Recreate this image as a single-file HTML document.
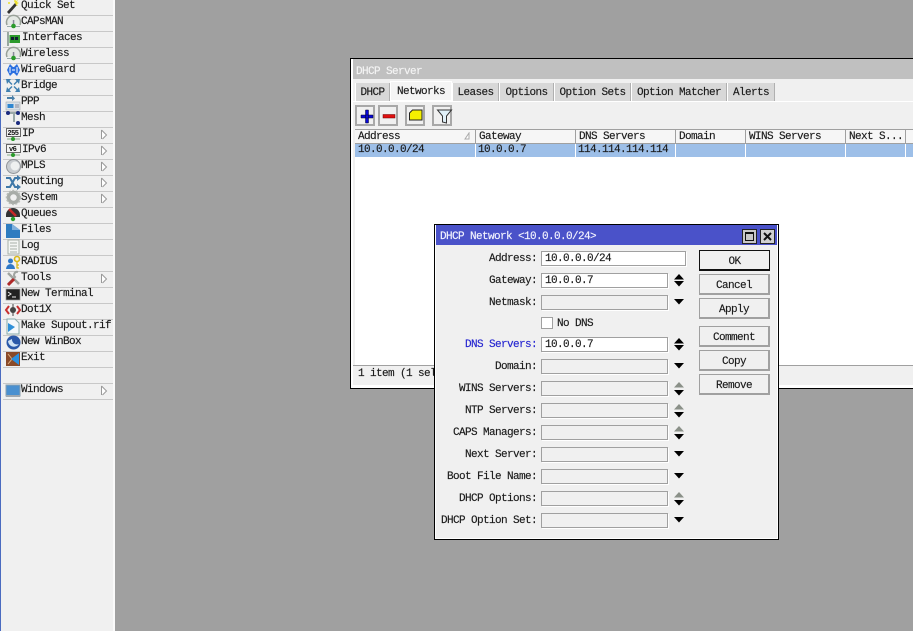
<!DOCTYPE html>
<html><head><meta charset="utf-8"><style>
html,body{margin:0;padding:0;width:913px;height:631px;overflow:hidden;background:#a0a0a0}
body{position:relative;font:11px/12px "Liberation Mono",monospace;letter-spacing:-.6px;color:#1a1a1a;-webkit-text-stroke:.15px}
div{position:absolute;box-sizing:border-box;white-space:pre}
.t{height:12px;margin-top:1px}
.ln{left:3px;width:110px;height:1px;background:#c8c8c8;border-bottom:0}
.tab{top:83px;height:18px;background:#d8d8d8;border-right:1px solid #b0b0b0;border-left:1px solid #fff;text-align:center;line-height:20px}
.tb{top:105px;width:20px;height:21px;background:#f0f0f0;border:2px solid #a8a8a8}
.h{top:130px;height:13px;background:#f6f6f6;border-right:1px solid #a0a0a0;padding-left:3px;line-height:15px}
.l{left:436px;width:101px;text-align:right}
.f{left:541px;width:127px;height:15px;background:#f0f0f0;border:1px solid #a0a0a0;box-shadow:1px 1px 0 #fff;padding-left:3px;line-height:15px;font-size:11px}
.w{background:#fff}
.b{left:699px;width:71px;height:21px;background:#f0f0f0;border:1px solid #a0a0a0;border-width:1px 2px 2px 1px;border-color:#a0a0a0;text-align:center;line-height:22px}
</style></head><body>
<div style="left:0;top:0;width:115px;height:631px;background:#f0f0f0;border-right:2px solid #fafafa;border-left:1px solid #4a6bc0"></div>
<div class="ln" style="top:15px"></div><div class="ln" style="top:31px"></div><div class="ln" style="top:47px"></div><div class="ln" style="top:63px"></div><div class="ln" style="top:79px"></div><div class="ln" style="top:95px"></div><div class="ln" style="top:111px"></div><div class="ln" style="top:127px"></div><div class="ln" style="top:143px"></div><div class="ln" style="top:159px"></div><div class="ln" style="top:175px"></div><div class="ln" style="top:191px"></div><div class="ln" style="top:207px"></div><div class="ln" style="top:223px"></div><div class="ln" style="top:239px"></div><div class="ln" style="top:255px"></div><div class="ln" style="top:271px"></div><div class="ln" style="top:287px"></div><div class="ln" style="top:303px"></div><div class="ln" style="top:319px"></div><div class="ln" style="top:335px"></div><div class="ln" style="top:351px"></div><div class="ln" style="top:367px"></div><div class="ln" style="top:383px"></div><div class="ln" style="top:399px"></div>
<div class="t" style="left:21px;top:-1px">Quick Set</div>
<div class="t" style="left:21px;top:15px">CAPsMAN</div>
<div class="t" style="left:22px;top:31px">Interfaces</div>
<div class="t" style="left:21px;top:47px">Wireless</div>
<div class="t" style="left:21px;top:63px">WireGuard</div>
<div class="t" style="left:21px;top:79px">Bridge</div>
<div class="t" style="left:21px;top:95px">PPP</div>
<div class="t" style="left:21px;top:111px">Mesh</div>
<div class="t" style="left:22px;top:127px">IP</div>
<div class="t" style="left:22px;top:143px">IPv6</div>
<div class="t" style="left:21px;top:159px">MPLS</div>
<div class="t" style="left:21px;top:175px">Routing</div>
<div class="t" style="left:21px;top:191px">System</div>
<div class="t" style="left:21px;top:207px">Queues</div>
<div class="t" style="left:21px;top:223px">Files</div>
<div class="t" style="left:21px;top:239px">Log</div>
<div class="t" style="left:21px;top:255px">RADIUS</div>
<div class="t" style="left:21px;top:271px">Tools</div>
<div class="t" style="left:21px;top:287px">New Terminal</div>
<div class="t" style="left:21px;top:303px">Dot1X</div>
<div class="t" style="left:21px;top:319px">Make Supout.rif</div>
<div class="t" style="left:21px;top:335px">New WinBox</div>
<div class="t" style="left:21px;top:351px">Exit</div>
<div class="t" style="left:21px;top:383px">Windows</div>

<svg style="position:absolute;left:0;top:0" width="115" height="400" viewBox="0 0 115 400">
<defs>
<g id="wl"><path d="M1 11A7 7 0 1 1 14 11" fill="#e4e8e4" stroke="#98a098" stroke-width="1.5"/><rect x="6.800" y="6" width="1.5" height="6" fill="#889"/><path d="M1 12.500h13" stroke="#9aa"/><circle cx="7.500" cy="12" r="2.300" fill="#2a9a2a"/></g>
<path id="ar" d="M0 0L0 9M0 0L5 5L1 9" fill="#fff" stroke="#999"/>
</defs>
<g transform="translate(6,-2)"><path d="M1 14L9 5l2 2-8 9z" fill="#333"/><path d="M8 3l1-2 1 2 2-1-1 2 2 1-2 1 1 2-2-1" fill="#ece030"/><circle cx="3" cy="5" r="1" fill="#ece030"/></g>
<g transform="translate(6,14)"><use href="#wl"/></g>
<g transform="translate(6,31)"><rect x="1" y="1" width="2" height="14" fill="#98a8a0"/><rect x="3.500" y="4" width="10.500" height="8" fill="#2c9a2c"/><rect x="5" y="6" width="3" height="3" fill="#123"/><rect x="9" y="6" width="3" height="3" fill="#123"/></g>
<g transform="translate(6,46)"><use href="#wl"/></g>
<g transform="translate(6,62)"><path d="M1 8L4 2l3 3h1l3-3 3 6-3 6-3-3H7l-3 3z" fill="#2a6fe0"/><path d="M4 5v6M11 5v6M6 8h3" stroke="#fff"/></g>
<g transform="translate(6,78)" fill="#3f7fb0"><path d="M0 1h5L3.500 3l3 3-1 1-3-3L1 6zM14 1H9l1.500 2-3 3 1 1 3-3L13 6zM0 14h5l-1.500-2 3-3-1-1-3 3L1 9zM14 14H9l1.500-2-3-3 1-1 3 3L13 9z"/></g>
<g transform="translate(6,95)"><path d="M1 2h5v-2l3 3.500L6 6V4H1z" fill="#4a7fa8"/><rect x="0" y="7" width="14" height="8" fill="#d8e0e8" stroke="#a0a8b0" stroke-width=".6"/><rect x="1.500" y="9" width="6" height="4" fill="#2e86d0"/><path d="M9 10h4M9 12h4" stroke="#889"/></g>
<g transform="translate(6,110)"><path d="M2 3h11M8 3v9" stroke="#9aa8a8" stroke-width="2"/><circle cx="2" cy="3" r="2" fill="#1c2c80"/><circle cx="12" cy="3" r="2" fill="#1c2c80"/><circle cx="12" cy="13" r="2" fill="#1c2c80"/></g>
<g transform="translate(6,127)"><rect x=".5" y="1.500" width="14" height="8" fill="#f4f4f4" stroke="#666"/><text x="1.500" y="8" font-size="7" font-family="Liberation Mono" font-weight="bold" fill="#111">255</text><path d="M1 12h13" stroke="#8a8"/><circle cx="7" cy="12" r="2" fill="#2a9a2a"/></g>
<g transform="translate(6,143)"><rect x=".5" y="1.500" width="14" height="8" fill="#f4f4f4" stroke="#666"/><text x="3" y="8" font-size="7" font-family="Liberation Mono" font-weight="bold" fill="#111">v6</text><path d="M1 12h13" stroke="#8a8"/><circle cx="7" cy="12" r="2" fill="#2a9a2a"/></g>
<g transform="translate(6,159)"><circle cx="7.500" cy="7.500" r="7" fill="#c8ccd0" stroke="#909498"/><circle cx="9" cy="7" r="4.500" fill="#eef0f0"/></g>
<g transform="translate(6,175)" fill="none" stroke="#3f78a8" stroke-width="2"><path d="M0 3h4l5 9h3M0 12h4l5-9h3"/><path d="M11 0l4 3-4 3zM11 9l4 3-4 3z" fill="#3f78a8" stroke="none"/></g>
<g transform="translate(6,190)"><circle cx="7.500" cy="7.500" r="5" fill="none" stroke="#a8aca8" stroke-width="3.500"/><circle cx="7.500" cy="7.500" r="7" fill="none" stroke="#b8bcb8" stroke-width="1.500" stroke-dasharray="2 1.500"/></g>
<g transform="translate(6,206)"><path d="M0 9a7 7 0 0 1 14 0v2H0z" fill="#333"/><path d="M3 3l7 7" stroke="#c82828" stroke-width="2.500"/><circle cx="7" cy="13" r="2.200" fill="#2aa02a"/></g>
<g transform="translate(6,223)"><path d="M0 1h6l8 6v8H0z" fill="#2e7cc0"/><path d="M6 1l8 6H6z" fill="#80b0dc"/></g>
<g transform="translate(6,239)"><rect x="2" y="1" width="11" height="14" fill="#f4f6f4" stroke="#a8b0a8"/><path d="M4 4h7M4 7h7M4 10h7M4 13h7" stroke="#a8b0a8"/></g>
<g transform="translate(6,255)"><circle cx="4.500" cy="6" r="2.500" fill="#2e78c8"/><path d="M0 14a4.500 5 0 0 1 9 0z" fill="#2e78c8"/><circle cx="11" cy="4" r="2.500" fill="none" stroke="#d8b818" stroke-width="1.600"/><path d="M11 6.500v7M11 10h2M11 13h2" stroke="#d8b818" stroke-width="1.300"/></g>
<g transform="translate(6,271)"><path d="M2 2l11 11" stroke="#a0a4a0" stroke-width="2.500"/><path d="M12 1a3 3 0 0 0-3 5L2 13" stroke="#a0a4a0" stroke-width="2" fill="none"/><path d="M8 8l-6 6" stroke="#b02828" stroke-width="3"/></g>
<g transform="translate(6,287)"><rect x="0" y="2" width="14" height="11" fill="#222" stroke="#999" stroke-width=".7"/><path d="M2 5l3 2-3 2M6 10h4" stroke="#eee" fill="none"/></g>
<g transform="translate(6,302)"><circle cx="7" cy="8" r="3" fill="#444"/><path d="M7 2v12" stroke="#444"/><path d="M3 4L0 8l3 4M11 4l3 4-3 4" fill="none" stroke="#c83030" stroke-width="2"/></g>
<g transform="translate(6,319)"><path d="M1 0h8l4 4v11H1z" fill="#f4f8fa" stroke="#8aa"/><path d="M2 4l7 4-7 5z" fill="#2e90d8"/></g>
<g transform="translate(6,335)"><circle cx="7.500" cy="7.500" r="7" fill="#2a58a8"/><path d="M2 6a6 6 0 0 0 11 3 5 5 0 0 1-7-5z" fill="#cfe2f4"/></g>
<g transform="translate(6,352)"><rect width="14" height="14" fill="#8a4a28"/><path d="M2 2l4 5-4 5" stroke="#e0b080" fill="none"/><path d="M13 1v12L5 7z" fill="#2a90e0"/></g>
<g transform="translate(6,383)"><rect x="0" y="2" width="14" height="11" fill="#4a90d0" stroke="#8aa0b0"/><path d="M0 13h14" stroke="#a0a8b0" stroke-width="2"/></g>
<use href="#ar" x="101.500" y="130"/><use href="#ar" x="101.500" y="146"/><use href="#ar" x="101.500" y="162"/><use href="#ar" x="101.500" y="178"/><use href="#ar" x="101.500" y="194"/><use href="#ar" x="101.500" y="274"/><use href="#ar" x="101.500" y="386"/>
</svg>

<!-- DHCP Server window -->
<div style="left:350px;top:58px;width:563px;height:331px;background:#000"></div>
<div style="left:351px;top:59px;width:562px;height:329px;background:#fff"></div>
<div style="left:353px;top:59px;width:560px;height:20px;background:#c0c0c0"></div>
<div class="t" style="left:356px;top:65px;color:#f4f4f4">DHCP Server</div>
<div style="left:353px;top:79px;width:560px;height:306px;background:#f0f0f0"></div>
<div class="tab" style="left:355px;width:35px">DHCP</div>
<div class="tab" style="left:390px;top:81px;width:62px;height:20px;background:#f4f4f4;border:1px solid #fff;line-height:21px">Networks</div>
<div class="tab" style="left:452px;width:47px">Leases</div>
<div class="tab" style="left:499px;width:55px">Options</div>
<div class="tab" style="left:554px;width:77px">Option Sets</div>
<div class="tab" style="left:631px;width:96px">Option Matcher</div>
<div class="tab" style="left:727px;width:48px">Alerts</div>
<div style="left:353px;top:101px;width:560px;height:1px;background:#fff"></div>
<div class="tb" style="left:355px"></div><div class="tb" style="left:378px"></div><div class="tb" style="left:405px"></div><div class="tb" style="left:432px"></div>
<svg style="position:absolute;left:350px;top:100px" width="110" height="30" viewBox="0 0 110 30">
<path d="M11 15h12v3H11zM15.500 10h3v13h-3z" fill="#0808d8" stroke="#002" stroke-width=".5"/>
<rect x="33" y="14.500" width="12" height="3.500" fill="#e01010" stroke="#600" stroke-width=".5"/>
<path d="M59.500 13l3-3h9.500v10H59.500z" fill="#f4f000" stroke="#222"/>
<path d="M87.500 10h14l-5 6v7l-4-1v-6z" fill="#e0f0f8" stroke="#333"/>
</svg>
<div style="left:355px;top:129px;width:558px;height:236px;background:#fff;border-top:1px solid #a0a0a0"></div>
<div class="h" style="left:355px;width:121px">Address</div>
<svg style="position:absolute;left:464px;top:132px" width="8" height="8"><path d="M1 7L5 1v6z" fill="#fff" stroke="#aaa"/></svg>
<div class="h" style="left:476px;width:100px">Gateway</div>
<div class="h" style="left:576px;width:100px">DNS Servers</div>
<div class="h" style="left:676px;width:70px">Domain</div>
<div class="h" style="left:746px;width:100px">WINS Servers</div>
<div class="h" style="left:846px;width:60px">Next S...</div>
<div class="h" style="left:906px;width:7px;border:0"></div>
<div style="left:355px;top:143px;width:558px;height:14px;background:#9dbfe8;border-top:1px solid #a0a0a0"></div>
<div style="left:475px;top:144px;width:1px;height:13px;background:#fff"></div><div style="left:575px;top:144px;width:1px;height:13px;background:#fff"></div><div style="left:675px;top:144px;width:1px;height:13px;background:#fff"></div><div style="left:745px;top:144px;width:1px;height:13px;background:#fff"></div><div style="left:845px;top:144px;width:1px;height:13px;background:#fff"></div><div style="left:905px;top:144px;width:1px;height:13px;background:#fff"></div>
<div class="t" style="left:358px;top:143px">10.0.0.0/24</div>
<div class="t" style="left:478px;top:143px">10.0.0.7</div>
<div class="t" style="left:578px;top:143px">114.114.114.114</div>
<div style="left:353px;top:365px;width:560px;height:1px;background:#a0a0a0"></div>
<div class="t" style="left:358px;top:367px">1 item (1 sel</div>

<!-- Dialog -->
<div style="left:434px;top:224px;width:345px;height:316px;background:#000"></div>
<div style="left:435px;top:225px;width:343px;height:314px;background:#f0f0f0;border:1px solid #fff;border-top:0"></div>
<div style="left:436px;top:225px;width:341px;height:20px;background:#4a52c9"></div>
<div class="t" style="left:440px;top:230px;color:#f4f4ff">DHCP Network &lt;10.0.0.0/24&gt;</div>
<div style="left:742px;top:229px;width:15px;height:15px;background:#c8c8c8;border:1px solid #222"></div>
<div style="left:745px;top:232px;width:9px;height:9px;border:1px solid #111;border-top-width:2px"></div>
<div style="left:760px;top:229px;width:15px;height:15px;background:#d0d0d0;border:1px solid #222"></div>
<svg style="position:absolute;left:763px;top:232px" width="9" height="9"><path d="M1 1l7 7M8 1L1 8" stroke="#111" stroke-width="2"/></svg>

<div class="t l" style="top:252px">Address:</div>
<div class="t l" style="top:274px">Gateway:</div>
<div class="t l" style="top:296px">Netmask:</div>
<div class="t l" style="top:338px;color:#2525d0">DNS Servers:</div>
<div class="t l" style="top:360px">Domain:</div>
<div class="t l" style="top:382px">WINS Servers:</div>
<div class="t l" style="top:404px">NTP Servers:</div>
<div class="t l" style="top:426px">CAPS Managers:</div>
<div class="t l" style="top:448px">Next Server:</div>
<div class="t l" style="top:470px">Boot File Name:</div>
<div class="t l" style="top:492px">DHCP Options:</div>
<div class="t l" style="top:514px">DHCP Option Set:</div>

<div class="f w" style="top:251px;width:145px">10.0.0.0/24</div>
<div class="f w" style="top:273px">10.0.0.7</div>
<div class="f" style="top:295px"></div>
<div class="f w" style="left:541px;top:317px;width:12px;height:12px;box-shadow:none"></div>
<div class="t" style="left:557px;top:317px">No DNS</div>
<div class="f w" style="top:337px">10.0.0.7</div>
<div class="f" style="top:359px"></div>
<div class="f" style="top:381px"></div>
<div class="f" style="top:403px"></div>
<div class="f" style="top:425px"></div>
<div class="f" style="top:447px"></div>
<div class="f" style="top:469px"></div>
<div class="f" style="top:491px"></div>
<div class="f" style="top:513px"></div>

<svg style="position:absolute;left:670px;top:250px" width="20" height="285" viewBox="0 0 20 285">
<defs>
<path id="u" d="M4 5.500L9 0l5 5.500z"/><path id="d" d="M4 0h10L9 5.500z"/>
</defs>
<use href="#u" y="24"/><use href="#d" y="31"/>
<use href="#d" y="49"/>
<use href="#u" y="88"/><use href="#d" y="95"/>
<use href="#d" y="113"/>
<use href="#u" y="132" fill="#8a9088"/><use href="#d" y="140"/>
<use href="#u" y="154" fill="#8a9088"/><use href="#d" y="162"/>
<use href="#u" y="176" fill="#8a9088"/><use href="#d" y="184"/>
<use href="#d" y="201"/>
<use href="#d" y="223"/>
<use href="#u" y="242" fill="#8a9088"/><use href="#d" y="250"/>
<use href="#d" y="267"/>
</svg>

<div class="b" style="top:250px;border:2px solid #111;border-width:1px 1px 2px 1px;line-height:22px">OK</div>
<div class="b" style="top:274px">Cancel</div>
<div class="b" style="top:298px">Apply</div>
<div class="b" style="top:326px">Comment</div>
<div class="b" style="top:350px">Copy</div>
<div class="b" style="top:374px">Remove</div>
</body></html>
